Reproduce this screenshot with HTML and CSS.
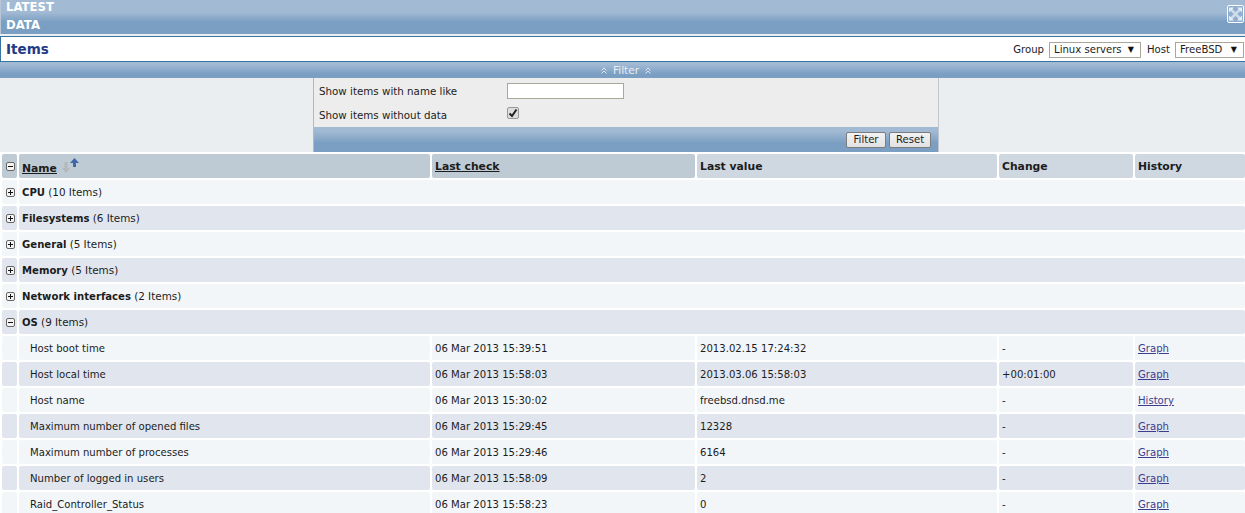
FILE: index.html
```html
<!DOCTYPE html>
<html lang="en">
<head>
<meta charset="utf-8">
<title>Latest data</title>
<link rel="stylesheet" href="styles.css">
</head>
<body>
<header class="titlebar">
  <h1 class="page-title">LATEST DATA</h1>
  <button class="fullscreen" aria-label="Fullscreen">
    <svg width="17" height="18" viewBox="0 0 17 18"><rect x="0.500" y="0.500" width="16" height="17" rx="1.500" fill="#8fadcc" stroke="#fff"/><path d="M3.500 4 13.500 14M13.500 4 3.500 14" stroke="#cfdcea" stroke-width="2.500" fill="none"/><path d="M2 2.500h5L2 7.500zM15 2.500h-5l5 5zM2 15.500h5l-5-5zM15 15.500h-5l5-5z" fill="#e6eef6"/></svg>
  </button>
</header>
<section class="itemsbar">
  <h2 class="items-title">Items</h2>
  <div class="selectors">
    <label class="sel-label"><span class="sel-text">Group</span> <span class="sel sel-group"><select><option>Linux servers</option></select></span></label>
    <label class="sel-label"><span class="sel-text">Host</span> <span class="sel sel-host"><select><option>FreeBSD</option></select></span></label>
  </div>
</section>
<div class="filterbar">
  <svg class="chev" width="6" height="7" viewBox="0 0 6 7"><path d="M.5 3.500 3 1l2.500 2.500M.5 6.500 3 4l2.500 2.500" fill="none" stroke="#dfe8f1"/></svg>
  <span>Filter</span>
  <svg class="chev" width="6" height="7" viewBox="0 0 6 7"><path d="M.5 3.500 3 1l2.500 2.500M.5 6.500 3 4l2.500 2.500" fill="none" stroke="#dfe8f1"/></svg>
</div>
<form class="filter">
  <div class="filter-body">
    <div class="filter-row"><span class="filter-label">Show items with name like</span><input class="filter-input" type="text"></div>
    <div class="filter-row"><span class="filter-label">Show items without data</span><input class="filter-check" type="checkbox" checked></div>
  </div>
  <div class="filter-foot"><button class="btn" type="button">Filter</button><button class="btn" type="button">Reset</button></div>
</form>
<table class="grid">
  <colgroup><col class="c0"><col class="c1"><col class="c2"><col class="c3"><col class="c4"><col></colgroup>
  <thead>
    <tr>
      <th class="sorted"><svg class="tog" viewBox="0 0 9 9"><use href="#minus"/></svg></th>
      <th class="sorted"><a href="#">Name</a> <svg class="sort" width="17" height="15" viewBox="0 0 17 15"><path d="M2.500 4h3v6H8l-4 5-4-5h2.500z" fill="#b4b8bc"/><path d="M12.500 0 17 5h-3v4h-3V5H8z" fill="#3f68a8"/></svg></th>
      <th class="sorted"><a href="#">Last check</a></th>
      <th>Last value</th>
      <th>Change</th>
      <th>History</th>
    </tr>
  </thead>
  <tbody>
    <tr class="odd"><td><svg class="tog" viewBox="0 0 9 9"><use href="#plus"/></svg></td><td colspan="5"><b>CPU</b> <span class="count">(10 Items)</span></td></tr>
    <tr class="even"><td><svg class="tog" viewBox="0 0 9 9"><use href="#plus"/></svg></td><td colspan="5"><b>Filesystems</b> <span class="count">(6 Items)</span></td></tr>
    <tr class="odd"><td><svg class="tog" viewBox="0 0 9 9"><use href="#plus"/></svg></td><td colspan="5"><b>General</b> <span class="count">(5 Items)</span></td></tr>
    <tr class="even"><td><svg class="tog" viewBox="0 0 9 9"><use href="#plus"/></svg></td><td colspan="5"><b>Memory</b> <span class="count">(5 Items)</span></td></tr>
    <tr class="odd"><td><svg class="tog" viewBox="0 0 9 9"><use href="#plus"/></svg></td><td colspan="5"><b>Network interfaces</b> <span class="count">(2 Items)</span></td></tr>
    <tr class="even"><td><svg class="tog" viewBox="0 0 9 9"><use href="#minus"/></svg></td><td colspan="5"><b>OS</b> <span class="count">(9 Items)</span></td></tr>
    <tr class="odd"><td></td><td class="item">Host boot time</td><td>06 Mar 2013 15:39:51</td><td>2013.02.15 17:24:32</td><td>-</td><td><a href="#">Graph</a></td></tr>
    <tr class="even"><td></td><td class="item">Host local time</td><td>06 Mar 2013 15:58:03</td><td>2013.03.06 15:58:03</td><td>+00:01:00</td><td><a href="#">Graph</a></td></tr>
    <tr class="odd"><td></td><td class="item">Host name</td><td>06 Mar 2013 15:30:02</td><td>freebsd.dnsd.me</td><td>-</td><td><a href="#">History</a></td></tr>
    <tr class="even"><td></td><td class="item">Maximum number of opened files</td><td>06 Mar 2013 15:29:45</td><td>12328</td><td>-</td><td><a href="#">Graph</a></td></tr>
    <tr class="odd"><td></td><td class="item">Maximum number of processes</td><td>06 Mar 2013 15:29:46</td><td>6164</td><td>-</td><td><a href="#">Graph</a></td></tr>
    <tr class="even"><td></td><td class="item">Number of logged in users</td><td>06 Mar 2013 15:58:09</td><td>2</td><td>-</td><td><a href="#">Graph</a></td></tr>
    <tr class="odd"><td></td><td class="item">Raid_Controller_Status</td><td>06 Mar 2013 15:58:23</td><td>0</td><td>-</td><td><a href="#">Graph</a></td></tr>
  </tbody>
</table>
<svg class="defs" width="0" height="0" aria-hidden="true">
  <symbol id="plus" viewBox="0 0 9 9"><rect x="0.500" y="0.500" width="8" height="8" rx="1.500" fill="#f4f4f4" stroke="#666"/><path d="M2 4.500h5M4.500 2v5" stroke="#111" fill="none"/></symbol>
  <symbol id="minus" viewBox="0 0 9 9"><rect x="0.500" y="0.500" width="8" height="8" rx="1.500" fill="#f4f4f4" stroke="#666"/><path d="M2 4.500h5" stroke="#111" fill="none"/></symbol>
</svg>
</body>
</html>
```

FILE: styles.css
```css
html, body { margin: 0; height: 100%; overflow: hidden; }
body {
  background: #ebeef1;
  color: #1c1c1c;
  font: 10.1px/1.2 "DejaVu Sans", sans-serif;
}
.defs { position: absolute; }
.titlebar {
  display: flex;
  justify-content: space-between;
  height: 34px;
  overflow: hidden;
  border-left: 1px solid #b9c6d5;
  background: linear-gradient(#a3bad4 0, #a3bad4 12px, #7a9fc3 22px, #7a9fc3 100%);
}
.page-title {
  width: 80px;
  margin: -2px 0 0;
  padding-left: 5px;
  font-size: 11.700px;
  line-height: 18px;
  font-weight: bold;
  color: #fff;
}
.fullscreen {
  margin: 5px 1px 0 0;
  padding: 0;
  width: 17px;
  height: 18px;
  border: 0;
  background: none;
}
.itemsbar {
  display: flex;
  justify-content: space-between;
  align-items: center;
  box-sizing: border-box;
  height: 26px;
  margin-top: 2px;
  padding: 0 1px 0 5px;
  background: #fff;
  border: 1px solid #39739f;
  border-right: 0;
}
.items-title {
  margin: 1px 0 0;
  font-size: 13.500px;
  font-weight: bold;
  color: #243a86;
}
.selectors { display: flex; gap: 6px; margin-top: 1px; }
.sel-label { display: flex; align-items: center; gap: 5px; }
.sel-text { padding-top: 1px; }
.sel { position: relative; display: block; }
.sel::after {
  content: "▼";
  position: absolute;
  right: 7px;
  top: 3px;
  font-size: 8px;
  color: #111;
  pointer-events: none;
}
.sel select {
  display: block;
  appearance: none;
  box-sizing: border-box;
  height: 16px;
  padding: 1px 0 0 4px;
  border: 1px solid #aaa69a;
  border-radius: 0;
  background: #fff;
  color: #1c1c1c;
  font: inherit;
}
.sel-group select { width: 92px; }
.sel-host select { width: 69px; }
.filterbar {
  display: flex;
  justify-content: center;
  align-items: center;
  gap: 6px;
  height: 16px;
  padding: 1px 0 0 7px;
  box-sizing: border-box;
  font-size: 10.600px;
  color: #e8eef5;
  background: linear-gradient(#a3bad4 0, #a3bad4 2px, #7a9fc3 12px, #7a9fc3 100%);
}
.filter {
  width: 626px;
  margin: 0 0 0 313px;
  box-sizing: border-box;
  border-left: 1px solid #b0b8c0;
  border-right: 1px solid #c0c6cc;
  background: #ededed;
}
.filter-body { height: 49px; padding: 1px 0 0 5px; box-sizing: border-box; }
.filter-row { display: flex; align-items: center; height: 24px; }
.filter-label { width: 188px; padding-top: 1px; font-size: 10.300px; }
.filter-input {
  box-sizing: border-box;
  width: 117px;
  height: 16px;
  padding: 0;
  border: 1px solid #aaa69a;
  background: #fff;
}
.filter-check {
  appearance: none;
  box-sizing: border-box;
  width: 12px;
  height: 12px;
  margin: -4px 0 0;
  border: 1px solid #999;
  border-radius: 2px;
  background: #dedede url("data:image/svg+xml,%3Csvg xmlns='http://www.w3.org/2000/svg' viewBox='0 0 10 10'%3E%3Cpath d='M1.500 5.500 4 8l4.500-6.500' fill='none' stroke='%23222' stroke-width='2'/%3E%3C/svg%3E") center/10px no-repeat;
}
.filter-foot {
  display: flex;
  justify-content: flex-end;
  align-items: center;
  gap: 3px;
  box-sizing: border-box;
  height: 25px;
  padding: 0 7px 0 0;
  background: linear-gradient(#a3bad4 0, #a3bad4 4px, #7a9fc3 16px, #7a9fc3 100%);
}
.btn {
  box-sizing: border-box;
  height: 16px;
  width: 40px;
  padding: 1px 0 0;
  border: 1px solid #7d7d7d;
  border-radius: 2px;
  background: linear-gradient(#f2f2f2, #e2e2e2);
  color: #1c1c1c;
  font: inherit;
}
.btn + .btn { width: 42px; }
.grid {
  width: calc(100% + 2px);
  margin-top: 0;
  border-collapse: separate;
  border-spacing: 2px;
  table-layout: fixed;
  background: #fff;
}
.c0 { width: 15px; }
.c1 { width: 411px; }
.c2 { width: 263px; }
.c3 { width: 300px; }
.c4 { width: 134px; }
.grid th, .grid td {
  height: 24px;
  padding: 2px 3px 0;
  box-sizing: border-box;
  border-radius: 2px;
  text-align: left;
  white-space: nowrap;
}
.grid th {
  background: #cfd7e0;
  font-size: 10.800px;
}
.grid th.sorted { background: #bfcbd4; }
.grid th a { color: #1c1c1c; }
.sort { vertical-align: -1px; margin-left: 1px; }
.tog { display: block; width: 9px; height: 9px; margin: -2px 0 0 1px; }
.odd td { background: #f2f6f9; }
.even td { background: #e1e6ee; }
.grid b { font-weight: bold; }
.count { font-size: 10.400px; }
.grid td.item { padding-left: 11px; }
.grid td a { color: #3d3d8e; }
```
